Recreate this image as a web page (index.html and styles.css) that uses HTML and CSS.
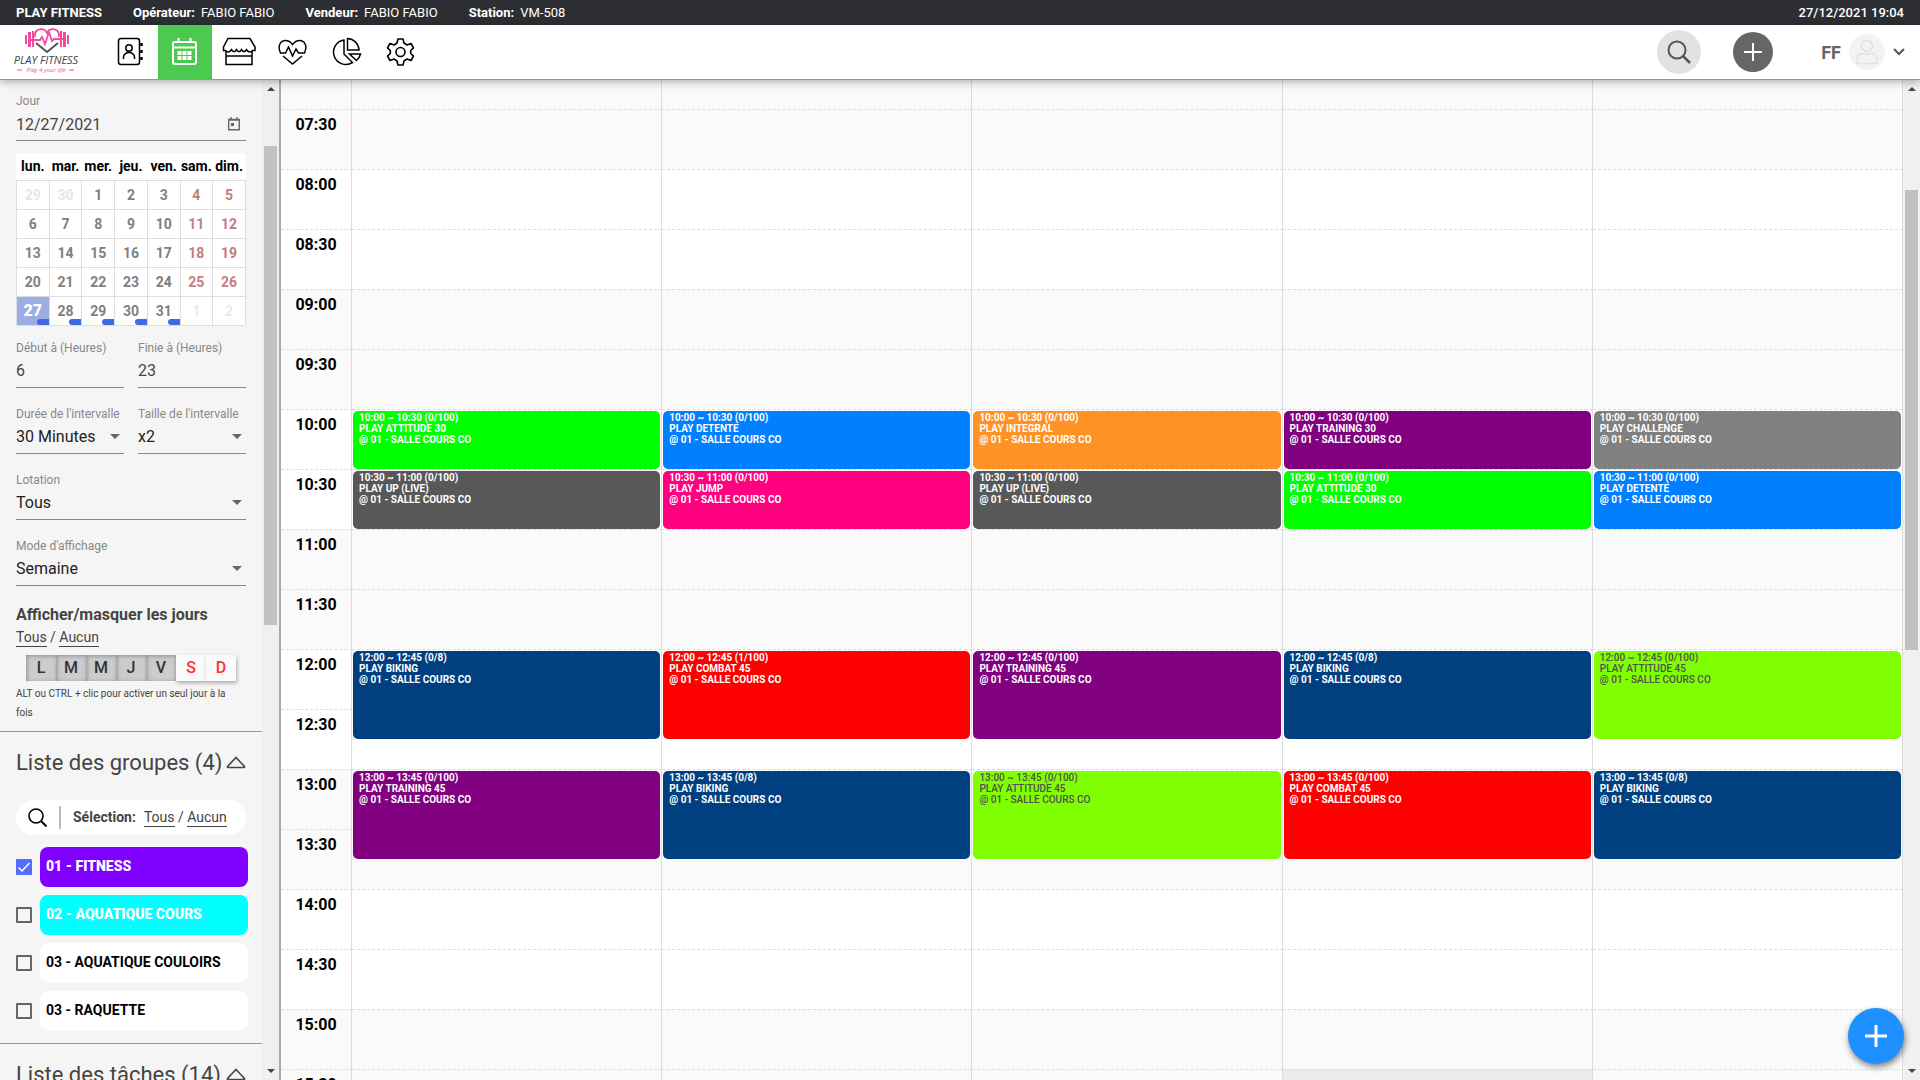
FILE: index.html
```html
<!DOCTYPE html>
<html lang="fr">
<head>
	<meta charset="utf-8">
	<meta name="viewport" content="width=device-width, initial-scale=1">
	<title>PLAY FITNESS - Planning</title>
	<link rel="stylesheet" href="styles.css">
</head>
<body>
	<div class="topbar">
		<b>PLAY FITNESS</b>
		<span class="info"><b>Opérateur:</b> <span>FABIO FABIO</span></span>
		<span class="info"><b>Vendeur:</b> <span>FABIO FABIO</span></span>
		<span class="info"><b>Station:</b> <span>VM-508</span></span>
		<time class="clock">27/12/2021 19:04</time>
	</div>

	<header class="header">
		<a class="logo" href="#" aria-label="PLAY FITNESS">
			<svg width="66" height="50" viewBox="0 0 66 50">
				<g fill="none" stroke="#f04ca0" stroke-width="1.8">
					<path d="M21 10c-1-9 9-10 12-4 3-6 13-5 12 4"/>
					<path d="M17 13h9l2-3 3 7 4-12 3 9 2-2h9"/>
				</g>
				<g fill="#f04ca0">
					<rect x="11" y="8" width="2" height="9"/>
					<rect x="14" y="5" width="3" height="15"/>
					<rect x="18" y="4" width="2" height="16"/>
					<rect x="46" y="4" width="2" height="16"/>
					<rect x="49" y="5" width="3" height="15"/>
					<rect x="53" y="8" width="2" height="9"/>
				</g>
				<path d="M22 16l11 9 11-9" fill="none" stroke="#555" stroke-width="2"/>
				<text class="logo-name" x="32" y="37" text-anchor="middle">PLAY FITNESS</text>
				<text class="logo-tag" x="32" y="45" text-anchor="middle">Play 4 your life</text>
				<path d="M3 43h5M55 43h5" stroke="#f04ca0"/>
			</svg>
		</a>
		<nav class="nav">
			<a href="#" aria-label="Clients">
				<svg width="30" height="30" viewBox="0 0 30 30" fill="none" stroke="#000" stroke-width="1.5">
					<rect x="2.500" y="1.500" width="21" height="26" rx="2.500"/>
					<circle cx="13" cy="11" r="3.200"/>
					<path d="M7.500 22v-2a5.500 4.500 0 0 1 11 0v2"/>
					<path d="M25.500 6v3M25.500 13v3M25.500 20v3" stroke-width="2.500"/>
				</svg>
			</a>
			<a class="active" href="#" aria-label="Planning">
				<svg width="30" height="30" viewBox="0 0 30 30" fill="none" stroke="#fff" stroke-width="2">
					<rect x="3" y="5" width="23" height="22" rx="2"/>
					<path d="M3 10.500h23M8.500 1v4M20.500 1v4"/>
					<path d="M7.500 16h14M7.500 21h14" stroke-width="4" stroke-dasharray="4 1"/>
				</svg>
			</a>
			<a href="#" aria-label="Boutique">
				<svg width="34" height="30" viewBox="0 0 34 30" fill="none" stroke="#000" stroke-width="1.500">
					<path d="M6 1.500h22l5 8.500v3.500h-2.500c-2 2-4 2-6-.8-2 2.800-3.500 2.800-5 0-1.500 2.800-3.500 2.800-5 0-1.500 2.800-3.500 2.800-5 0-2 2.800-4 2.800-6 .8H1.500V10z"/>
					<path d="M4 14v13.500h26V14M4 19h26"/>
				</svg>
			</a>
			<a href="#" aria-label="Santé">
				<svg width="30" height="30" viewBox="0 0 30 30" fill="none" stroke="#000" stroke-width="1.500">
					<path d="M2.500 16C-1 8 3 3.500 7.500 3.500c3.500 0 5.500 2 7 4 1.500-2 3.500-4 7-4 4.500 0 8.500 4.500 5 12.500h-6l-2.500-4-3.500 7-4-9-3 6z"/>
					<path d="M5 19l9.500 8L24 19"/>
				</svg>
			</a>
			<a href="#" aria-label="Statistiques">
				<svg width="30" height="30" viewBox="0 0 30 30" fill="none" stroke="#000" stroke-width="1.500">
					<path d="M12 3a12.300 12.300 0 1 0 8.500 22.500l-8.500-8.500z"/>
					<path d="M15.500 1.500A12 12 0 0 1 27 13H15.500z"/>
					<path d="M17.500 17H28.500q-1 4-4 6.500z"/>
				</svg>
			</a>
			<a href="#" aria-label="Paramètres">
				<svg width="30" height="30" viewBox="0 0 30 30" fill="none" stroke="#000" stroke-width="1.600" stroke-linejoin="round">
					<path d="M12 2h5l1 4 3 2 4-1.500 2.500 4.300-2.800 2.700v3l2.800 2.700L25 23.500 21 22l-3 2-1 4h-5l-1-4-3-2-4 1.500-2.500-4.300 2.800-2.700v-3L1.500 10.800 4 6.500 8 8l3-2z"/>
					<circle cx="14.500" cy="15" r="4.500"/>
				</svg>
			</a>
		</nav>
		<div class="tools">
			<button class="round search" aria-label="Rechercher">
				<svg width="24" height="24" viewBox="0 0 24 24" fill="none" stroke="#555" stroke-width="2"><circle cx="10" cy="10" r="8.500"/><path d="M16 16l7 7" stroke-width="2.500"/></svg>
			</button>
			<button class="round add" aria-label="Ajouter">
				<svg width="18" height="18" viewBox="0 0 18 18" stroke="#fff" stroke-width="2"><path d="M9 0v18M0 9h18"/></svg>
			</button>
			<button class="user" aria-label="Compte">
				<span>FF</span>
				<span class="avatar">
					<svg width="24" height="26" viewBox="0 0 24 26" fill="none" stroke="#e2e2e2" stroke-width="1.500"><circle cx="12" cy="7" r="5.500"/><path d="M2 24.500v-4q0-5 5-6 5 2 10 0 5 1 5 6v4z"/></svg>
				</span>
				<svg width="12" height="8" viewBox="0 0 12 8" fill="none" stroke="#555" stroke-width="2"><path d="M1 1l5 5 5-5"/></svg>
			</button>
		</div>
	</header>

	<main class="main">
		<aside class="sidebar">
			<div class="filters">
				<div class="field">
					<label for="day">Jour</label>
					<div class="date">
						<input id="day" type="text" value="12/27/2021">
						<svg width="12" height="14" viewBox="0 0 12 14"><path d="M.700 2.500h10.600v10.300H.700zM.500 3h11M3 0v2M9 0v2" fill="none" stroke="#666" stroke-width="1.400"/><path d="M3 6h3v3H3z" fill="#666"/></svg>
					</div>
				</div>

				<table class="cal">
					<thead>
						<tr><th>lun.</th><th>mar.</th><th>mer.</th><th>jeu.</th><th>ven.</th><th>sam.</th><th>dim.</th></tr>
					</thead>
					<tbody>
						<tr><td class="out">29</td><td class="out">30</td><td>1</td><td>2</td><td>3</td><td class="we">4</td><td class="we">5</td></tr>
						<tr><td>6</td><td>7</td><td>8</td><td>9</td><td>10</td><td class="we">11</td><td class="we">12</td></tr>
						<tr><td>13</td><td>14</td><td>15</td><td>16</td><td>17</td><td class="we">18</td><td class="we">19</td></tr>
						<tr><td>20</td><td>21</td><td>22</td><td>23</td><td>24</td><td class="we">25</td><td class="we">26</td></tr>
						<tr><td class="busy today">27</td><td class="busy">28</td><td class="busy">29</td><td class="busy">30</td><td class="busy">31</td><td class="we out">1</td><td class="we out">2</td></tr>
					</tbody>
				</table>

				<div class="pair">
					<div class="field">
						<label for="start">Début à (Heures)</label>
						<input id="start" type="text" value="6">
					</div>
					<div class="field">
						<label for="end">Finie à (Heures)</label>
						<input id="end" type="text" value="23">
					</div>
				</div>
				<div class="pair">
					<div class="field">
						<label for="step">Durée de l'intervalle</label>
						<select id="step"><option>30 Minutes</option></select>
					</div>
					<div class="field">
						<label for="size">Taille de l'intervalle</label>
						<select id="size"><option>x2</option></select>
					</div>
				</div>
				<div class="field">
					<label for="lot">Lotation</label>
					<select id="lot"><option>Tous</option></select>
				</div>
				<div class="field">
					<label for="mode">Mode d'affichage</label>
					<select id="mode"><option>Semaine</option></select>
				</div>

				<h3>Afficher/masquer les jours</h3>
				<p class="pick"><a href="#">Tous</a> / <a href="#">Aucun</a></p>
				<div class="days">
					<button class="on">L</button><button class="on">M</button><button class="on">M</button><button class="on">J</button><button class="on">V</button><button>S</button><button>D</button>
				</div>
				<p class="hint">ALT ou CTRL + clic pour activer un seul jour à la fois</p>
			</div>

			<section class="groups">
				<h2>Liste des groupes (4)
					<svg width="20" height="13" viewBox="0 0 20 13"><path d="M10 1.500L18.500 10.500q.5 1-.5 1H2q-1 0-.5-1z" fill="none" stroke="#444" stroke-width="1.600"/></svg>
				</h2>
				<div class="select-bar">
					<button class="find" aria-label="Chercher un groupe">
						<svg width="19" height="19" viewBox="0 0 19 19" fill="none" stroke="#000" stroke-width="1.600"><circle cx="8" cy="8" r="7"/><path d="M13 13l5.500 5.500" stroke-width="2"/></svg>
					</button>
					<b>Sélection:</b>
					<p class="pick"><a href="#">Tous</a> / <a href="#">Aucun</a></p>
				</div>
				<ul>
					<li><input type="checkbox" id="g1" checked><label class="violet" for="g1">01 - FITNESS</label></li>
					<li><input type="checkbox" id="g2"><label class="cyan" for="g2">02 - AQUATIQUE COURS</label></li>
					<li><input type="checkbox" id="g3"><label for="g3">03 - AQUATIQUE COULOIRS</label></li>
					<li><input type="checkbox" id="g4"><label for="g4">03 - RAQUETTE</label></li>
				</ul>
			</section>

			<section class="groups">
				<h2>Liste des tâches (14)
					<svg width="20" height="13" viewBox="0 0 20 13"><path d="M10 1.500L18.500 10.500q.5 1-.5 1H2q-1 0-.5-1z" fill="none" stroke="#444" stroke-width="1.600"/></svg>
				</h2>
			</section>
		</aside>
		<div class="scrollbar side-bar">
			<i class="up"></i>
			<div class="track"><div class="thumb"></div></div>
			<i class="down"></i>
		</div>

		<div class="planning">
			<table class="grid">
				<colgroup><col class="hours"><col><col><col><col><col></colgroup>
				<tbody>
					<tr class="odd cut"><th></th><td></td><td></td><td></td><td></td><td></td></tr>
					<tr class="odd"><th>07:30</th><td></td><td></td><td></td><td></td><td></td></tr>
					<tr><th>08:00</th><td></td><td></td><td></td><td></td><td></td></tr>
					<tr><th>08:30</th><td></td><td></td><td></td><td></td><td></td></tr>
					<tr class="odd"><th>09:00</th><td></td><td></td><td></td><td></td><td></td></tr>
					<tr class="odd"><th>09:30</th><td></td><td></td><td></td><td></td><td></td></tr>
					<tr>
						<th>10:00</th>
						<td><div class="ev green">10:00 ~ 10:30 (0/100)<br>PLAY ATTITUDE 30<br>@ 01 - SALLE COURS CO</div></td>
						<td><div class="ev blue">10:00 ~ 10:30 (0/100)<br>PLAY DETENTE<br>@ 01 - SALLE COURS CO</div></td>
						<td><div class="ev orange">10:00 ~ 10:30 (0/100)<br>PLAY INTEGRAL<br>@ 01 - SALLE COURS CO</div></td>
						<td><div class="ev purple">10:00 ~ 10:30 (0/100)<br>PLAY TRAINING 30<br>@ 01 - SALLE COURS CO</div></td>
						<td><div class="ev gray">10:00 ~ 10:30 (0/100)<br>PLAY CHALLENGE<br>@ 01 - SALLE COURS CO</div></td>
					</tr>
					<tr>
						<th>10:30</th>
						<td><div class="ev dark">10:30 ~ 11:00 (0/100)<br>PLAY UP (LIVE)<br>@ 01 - SALLE COURS CO</div></td>
						<td><div class="ev pink">10:30 ~ 11:00 (0/100)<br>PLAY JUMP<br>@ 01 - SALLE COURS CO</div></td>
						<td><div class="ev dark">10:30 ~ 11:00 (0/100)<br>PLAY UP (LIVE)<br>@ 01 - SALLE COURS CO</div></td>
						<td><div class="ev green">10:30 ~ 11:00 (0/100)<br>PLAY ATTITUDE 30<br>@ 01 - SALLE COURS CO</div></td>
						<td><div class="ev blue">10:30 ~ 11:00 (0/100)<br>PLAY DETENTE<br>@ 01 - SALLE COURS CO</div></td>
					</tr>
					<tr class="odd"><th>11:00</th><td></td><td></td><td></td><td></td><td></td></tr>
					<tr class="odd"><th>11:30</th><td></td><td></td><td></td><td></td><td></td></tr>
					<tr>
						<th>12:00</th>
						<td rowspan="2"><div class="ev long navy">12:00 ~ 12:45 (0/8)<br>PLAY BIKING<br>@ 01 - SALLE COURS CO</div></td>
						<td rowspan="2"><div class="ev long red">12:00 ~ 12:45 (1/100)<br>PLAY COMBAT 45<br>@ 01 - SALLE COURS CO</div></td>
						<td rowspan="2"><div class="ev long purple">12:00 ~ 12:45 (0/100)<br>PLAY TRAINING 45<br>@ 01 - SALLE COURS CO</div></td>
						<td rowspan="2"><div class="ev long navy">12:00 ~ 12:45 (0/8)<br>PLAY BIKING<br>@ 01 - SALLE COURS CO</div></td>
						<td rowspan="2"><div class="ev long lime">12:00 ~ 12:45 (0/100)<br>PLAY ATTITUDE 45<br>@ 01 - SALLE COURS CO</div></td>
					</tr>
					<tr><th>12:30</th></tr>
					<tr class="odd">
						<th>13:00</th>
						<td rowspan="2"><div class="ev long purple">13:00 ~ 13:45 (0/100)<br>PLAY TRAINING 45<br>@ 01 - SALLE COURS CO</div></td>
						<td rowspan="2"><div class="ev long navy">13:00 ~ 13:45 (0/8)<br>PLAY BIKING<br>@ 01 - SALLE COURS CO</div></td>
						<td rowspan="2"><div class="ev long lime">13:00 ~ 13:45 (0/100)<br>PLAY ATTITUDE 45<br>@ 01 - SALLE COURS CO</div></td>
						<td rowspan="2"><div class="ev long red">13:00 ~ 13:45 (0/100)<br>PLAY COMBAT 45<br>@ 01 - SALLE COURS CO</div></td>
						<td rowspan="2"><div class="ev long navy">13:00 ~ 13:45 (0/8)<br>PLAY BIKING<br>@ 01 - SALLE COURS CO</div></td>
					</tr>
					<tr class="odd"><th>13:30</th></tr>
					<tr><th>14:00</th><td></td><td></td><td></td><td></td><td></td></tr>
					<tr><th>14:30</th><td></td><td></td><td></td><td></td><td></td></tr>
					<tr class="odd"><th>15:00</th><td></td><td></td><td></td><td></td><td></td></tr>
					<tr class="odd"><th>15:30</th><td></td><td></td><td></td><td class="hover"></td><td></td></tr>
				</tbody>
			</table>
		</div>
		<div class="scrollbar page-bar">
			<i class="up"></i>
			<div class="track"><div class="thumb"></div></div>
			<i class="down"></i>
		</div>
	</main>

	<button class="fab" aria-label="Nouveau cours">
		<svg width="22" height="22" viewBox="0 0 22 22" stroke="#fff" stroke-width="3"><path d="M11 0v22M0 11h22"/></svg>
	</button>
</body>
</html>
```
FILE: styles.css
```css
* {
	box-sizing: border-box;
}

body {
	margin: 0;
	height: 100vh;
	display: flex;
	flex-direction: column;
	overflow: hidden;
	font: 14px Roboto, sans-serif;
	color: #444;
	background: #fff;
}

a {
	color: inherit;
	text-decoration: none;
}

button, input, select {
	font: inherit;
	color: inherit;
	margin: 0;
	padding: 0;
	border: 0;
	background: none;
	border-radius: 0;
	outline: none;
}

p, ul, h2, h3 {
	margin: 0;
	padding: 0;
}

svg {
	display: block;
	flex: none;
}

/* top */
.topbar {
	flex: none;
	display: flex;
	align-items: center;
	gap: 31px;
	height: 25px;
	padding: 0 16px;
	background: #2d2e33;
	color: #fff;
	font-size: 13px;
}

.info {
	display: flex;
	gap: 6px;
}

.info b, .topbar > b {
	font-weight: 700;
}

.clock {
	margin-left: auto;
	font-weight: 500;
}

.header {
	position: relative;
	z-index: 2;
	flex: none;
	display: flex;
	height: 55px;
	padding-right: 15px;
	background: #fff;
	border-bottom: 1px solid #4bca4f;
	box-shadow: 0 2px 8px rgba(0, 0, 0, .3);
}

.logo {
	width: 104px;
	padding: 2px 0 0 14px;
}

.logo-name {
	font: italic 500 11px "Open Sans", sans-serif;
	fill: #444;
}

.logo-tag {
	font: italic 6px "Open Sans", sans-serif;
	fill: #f04ca0;
}

.nav {
	display: flex;
}

.nav a {
	width: 54px;
	display: flex;
	align-items: center;
	justify-content: center;
}

.nav .active {
	background: #4bca4f;
}

.tools {
	display: flex;
	align-items: center;
	margin-left: auto;
}

.round {
	display: flex;
	align-items: center;
	justify-content: center;
	border-radius: 50%;
}

.search {
	width: 44px;
	height: 44px;
	margin-right: 32px;
	background: #e2e2e2;
}

.add {
	width: 40px;
	height: 40px;
	margin-right: 48px;
	background: #666;
}

.user {
	display: flex;
	align-items: center;
	gap: 8px;
	font-size: 18px;
	font-weight: 700;
	color: #666;
}

.avatar {
	display: flex;
	align-items: center;
	justify-content: center;
	width: 36px;
	height: 36px;
	border-radius: 50%;
	background: #f3f3f3;
}

.main {
	flex: 1;
	min-height: 0;
	display: flex;
}

/* left column */
.sidebar {
	flex: none;
	width: 262px;
	overflow: hidden;
	background: #f5f5f5;
}

.filters {
	padding: 11px 16px 9px;
	border-bottom: 1px solid #999;
}

.field {
	flex: 1;
	min-width: 0;
	height: 50px;
	margin-bottom: 16px;
	border-bottom: 1px solid #888;
}

.field label {
	display: block;
	font-size: 12px;
	line-height: 20px;
	color: #888;
}

.field input, .field select {
	display: block;
	width: 100%;
	height: 26px;
	font-size: 16px;
	color: #444;
}

.field select {
	appearance: none;
	color: #222;
	background: url('data:image/svg+xml,%3Csvg xmlns="http://www.w3.org/2000/svg" width="10" height="5"%3E%3Cpath d="M0 0h10L5 5z" fill="%23666"/%3E%3C/svg%3E') no-repeat right 4px center;
}

.filters > .field:first-child {
	margin-bottom: 12px;
}

.date {
	display: flex;
	align-items: center;
	padding-right: 6px;
}

.pair {
	display: flex;
	gap: 14px;
}

.cal {
	width: 100%;
	margin-bottom: 12px;
	border-collapse: collapse;
	table-layout: fixed;
	background: #fff;
	text-align: center;
}

.cal th {
	height: 27px;
	padding: 0;
	font-weight: 700;
	color: #000;
}

.cal td {
	height: 29px;
	padding: 0;
	border: 1px solid #ddd;
	font-weight: 700;
	color: #808080;
}

.cal .we {
	color: #c67c7c;
}

.cal .out {
	color: #e6e6e6;
}

.cal .we.out {
	color: #f4e5e5;
}

.cal .busy {
	background: url('data:image/svg+xml,%3Csvg xmlns="http://www.w3.org/2000/svg" width="12" height="6"%3E%3Cpath d="M3 0h9v6H3a3 3 0 0 1 0-6" fill="%234169e1"/%3E%3C/svg%3E') no-repeat right bottom;
}

.cal .today {
	background-color: #9bade3;
	color: #fff;
	font-size: 16px;
	font-weight: 900;
}

h3 {
	font-size: 16px;
	line-height: 25px;
	font-weight: 700;
}

.pick {
	line-height: 20px;
}

.pick a {
	display: inline-block;
	line-height: 18px;
	border-bottom: 1px solid #444;
}

.days {
	display: flex;
	margin: 8px 10px 3px;
}

.days button {
	flex: 1;
	height: 26px;
	font-size: 16px;
	font-weight: 500;
	color: #ff3030;
	background: #fafafa;
	box-shadow: 1px 2px 4px rgba(0, 0, 0, .3);
}

.days .on {
	color: #333;
	background: #ccc;
	box-shadow: inset 1px 1px 4px rgba(0, 0, 0, .3);
}

.hint {
	padding-right: 12px;
	font-size: 10px;
	line-height: 19px;
}

.groups {
	padding: 16px 14px 12px 16px;
	border-bottom: 1px solid #999;
}

h2 {
	display: flex;
	align-items: center;
	justify-content: space-between;
	padding-right: 2px;
	font-size: 22px;
	line-height: 30px;
	font-weight: 400;
	white-space: nowrap;
}

.select-bar {
	display: flex;
	align-items: center;
	height: 35px;
	margin: 22px 2px 12px 0;
	border-radius: 18px;
	background: #fff;
}

.find {
	padding: 2px 12px;
	margin-right: 12px;
	border-right: 2px solid #bbb;
}

.select-bar .pick {
	margin-left: 8px;
}

ul {
	list-style: none;
	display: grid;
	gap: 8px;
}

li {
	display: flex;
	align-items: center;
	gap: 8px;
}

li input {
	appearance: none;
	flex: none;
	width: 16px;
	height: 16px;
	border: 2px solid #666;
	border-radius: 1px;
}

li input:checked {
	border: 0;
	background: #536dfe url('data:image/svg+xml,%3Csvg xmlns="http://www.w3.org/2000/svg" width="16" height="16"%3E%3Cpath d="M2.500 8.500l3.500 3.500 7.500-8" fill="none" stroke="white" stroke-width="1.500"/%3E%3C/svg%3E');
}

li label {
	flex: 1;
	height: 40px;
	padding: 0 6px;
	line-height: 38px;
	border-radius: 8px;
	font-weight: 700;
	color: #000;
	background: #fff;
}

li .violet, li .cyan {
	font-weight: 900;
	color: #fff;
	background: #8000ff;
}

li .cyan {
	background: #0ff;
}

/* scrollbars */
.scrollbar {
	flex: none;
	display: flex;
	flex-direction: column;
	align-items: center;
	width: 17px;
	padding: 7px 0;
	background: #f0f0f0;
}

.scrollbar i {
	border: 4px solid transparent;
	border-top-width: 0;
	border-bottom-color: #444;
}

.scrollbar .down {
	border-width: 4px 4px 0;
	border-top-color: #444;
}

.track {
	flex: 1;
	width: 13px;
}

.thumb {
	height: 49%;
	background: #c1c1c1;
}

.side-bar .thumb {
	margin-top: 55px;
}

.page-bar .thumb {
	height: 47%;
	margin-top: 99px;
}

/* week view */
.planning {
	flex: 1;
	min-width: 0;
	overflow: hidden;
	border-left: 2px solid #a9a9a9;
}

.grid {
	width: 100%;
	table-layout: fixed;
	border-collapse: separate;
	border-spacing: 0;
}

.grid .hours {
	width: 71px;
}

.grid tr {
	height: 60px;
}

.grid .cut {
	height: 29px;
}

.grid .odd {
	background: #fafafa;
}

.grid th, .grid td {
	padding: 0;
	vertical-align: top;
	border-top: 1px dashed #ddd;
	border-right: 1px solid #ddd;
}

.grid .cut > * {
	border-top: 0;
}

.grid th {
	font-size: 16px;
	line-height: 30px;
	font-weight: 700;
	color: #000;
}

.grid .hover {
	background: #ebebeb;
}

.ev {
	height: 58px;
	margin: 1px 1px 0;
	padding: 1px 6px;
	border-radius: 5px;
	font-size: 10px;
	line-height: 11px;
	font-weight: 700;
	color: #fff;
	white-space: nowrap;
	overflow: hidden;
}

.long {
	height: 88px;
}

.green { background: #0f0; }
.blue { background: #0080ff; }
.orange { background: #ff9224; }
.purple { background: #800080; }
.gray { background: #808080; }
.dark { background: #585858; }
.pink { background: #ff0080; }
.navy { background: #004080; }
.red { background: #f00; }

.lime {
	font-weight: 500;
	color: #505050;
	background: #80ff00;
}

.fab {
	position: fixed;
	right: 16px;
	bottom: 16px;
	z-index: 3;
	display: flex;
	align-items: center;
	justify-content: center;
	width: 56px;
	height: 56px;
	border-radius: 50%;
	background: #1e90ff;
	box-shadow: 1px 3px 6px rgba(0, 0, 0, .5);
}
```
